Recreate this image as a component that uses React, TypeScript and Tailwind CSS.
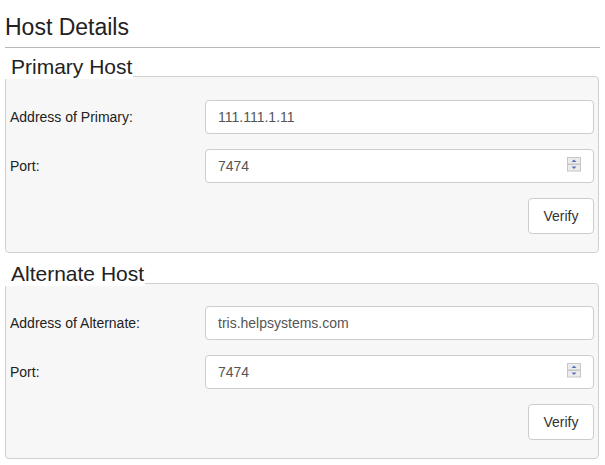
import React from "react";

function Spinner() {
  return (
    <svg width="14" height="15" viewBox="0 0 14 15" className="absolute right-[13px] top-[8px]">
      <rect x="0.5" y="0.5" width="13" height="6.5" fill="#ececec" stroke="#c6c6c6" />
      <rect x="0.5" y="7.5" width="13" height="6.5" fill="#ececec" stroke="#c6c6c6" />
      <path d="M4.5 5 L7 2.5 L9.5 5 Z" fill="#5a6fb8" />
      <path d="M4.5 9.5 L7 12 L9.5 9.5 Z" fill="#5a6fb8" />
    </svg>
  );
}

function Row({ label, value, spin }: { label: string; value: string; spin?: boolean }) {
  return (
    <div className="flex items-center">
      <div className="w-[195px] text-[14px] text-[#222]">{label}</div>
      <div className="relative flex-1">
        <div className="h-[34px] flex items-center rounded-[4px] border border-[#cccccc] bg-white pl-[12px] text-[14px] text-[#555]">
          {value}
        </div>
        {spin && <Spinner />}
      </div>
    </div>
  );
}

function Group({ title, rows, pt, mt }: { title: string; rows: [string, string, boolean][]; pt: string; mt: string }) {
  return (
    <div className={mt}>
      <div className="relative z-10 w-fit bg-white pl-[6px] pr-[1px] text-[21px] leading-[24px] text-[#222]">
        {title}
      </div>
      <div className={`-mt-[3px] w-[594px] rounded-[4px] border border-[#d0d0d0] bg-[#f7f7f7] px-[4px] pb-[18px] ${pt}`}>
        <div className="flex flex-col gap-[15px]">
          {rows.map(([l, v, s]) => (
            <Row key={l} label={l} value={v} spin={s} />
          ))}
          <div className="flex justify-end">
            <button className="h-[36px] w-[66px] rounded-[4px] border border-[#cccccc] bg-white text-[14px] text-[#333]">
              Verify
            </button>
          </div>
        </div>
      </div>
    </div>
  );
}

export default function App() {
  return (
    <div className="w-[605px] h-[465px] overflow-hidden bg-white font-['Liberation_Sans',Arial,sans-serif] text-[#333]">
      <div className="ml-[5px] w-[595px] pt-[14px]">
        <div className="text-[23px] leading-[26px] text-[#222]">Host Details</div>
        <div className="mt-[7px] h-px bg-[#b8b8b8]" />
        <Group
          mt="mt-[7px]"
          pt="pt-[23px]"
          title="Primary Host"
          rows={[
            ["Address of Primary:", "111.111.1.11", false],
            ["Port:", "7474", true],
          ]}
        />
        <Group
          mt="mt-[9px]"
          pt="pt-[22px]"
          title="Alternate Host"
          rows={[
            ["Address of Alternate:", "tris.helpsystems.com", false],
            ["Port:", "7474", true],
          ]}
        />
      </div>
    </div>
  );
}
